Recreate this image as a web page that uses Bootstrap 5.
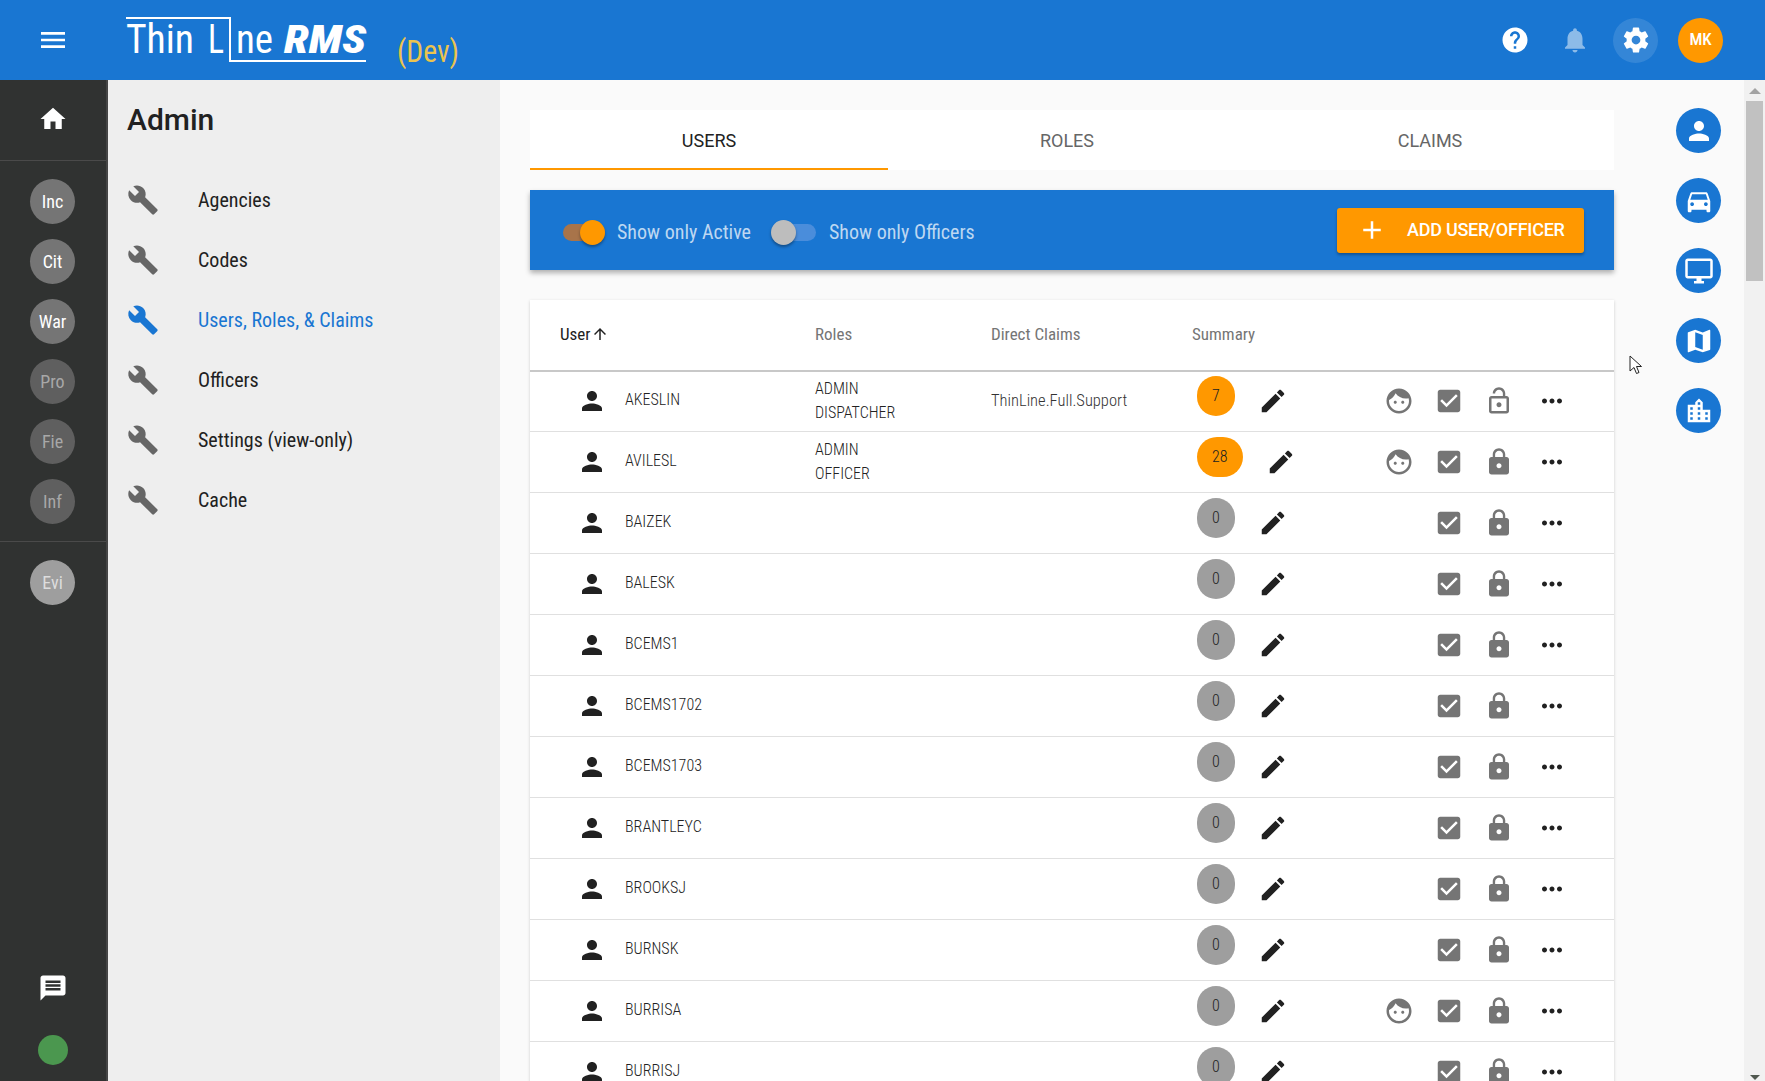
<!DOCTYPE html>
<html lang="en"><head><meta charset="utf-8"><title>Thin Line RMS</title>
<link href="https://cdn.jsdelivr.net/npm/bootstrap@5.3.0/dist/css/bootstrap.min.css" rel="stylesheet">
<style>
html,body{height:1081px;overflow:hidden}
body{font-family:Roboto,"Liberation Sans",sans-serif;background:#fafafa;color:#212121;font-stretch:75%}
.ic{width:30px;height:30px;fill:currentColor;flex:none;display:block}
.topbar{height:80px;background:#1976d2;color:#fff}
.menu-btn{margin-left:37px;width:32px;height:32px}
.logo{margin-left:57px;width:345px;height:80px}
.top-act{width:60px;height:45px}
.top-gear{background:rgba(255,255,255,.12);width:45px;border-radius:50%;margin:0 8px}
.top-mk{background:#ff9800;width:45px;height:45px;border-radius:50%;font-size:17px;font-weight:500;margin:0 42px 0 12px}
.rail{width:108px;background:#303231;border-right:2px solid #454545;color:#fff;padding-right:1px}
.rail-home{height:81px;border-bottom:1px solid #4a4a4a;padding-bottom:2px;margin-right:-1px}
.rail-group{padding:18px 0 17px;gap:15px;border-bottom:1px solid #4a4a4a;margin-right:-1px;padding-right:1px}
.rail-evi{padding-top:18px}
.rail-c{width:45px;height:45px;border-radius:50%;background:#757575;font-size:18px}
.rail-dim{background:#5f5f5f;color:#a8a8a8}
.rail-lite{background:#9e9e9e;color:#ddd}
.rail-dot{width:30px;height:30px;border-radius:50%;background:#4b974f;margin:32px 0 16px}
.sub{width:392px;background:#eee;padding-left:19px}
.sub-title{font-size:30px;font-weight:500;line-height:36px;margin:22px 0 32px;font-stretch:100%}
.sub-item{height:60px;font-size:20px;color:#212121}
.sub-item .ic{width:32px;height:32px;color:#666;margin-right:39px}
.sub-on,.sub-on .ic{color:#1976d2!important}
.work{width:1084px;margin-left:30px;padding-top:30px}
.tabs{height:60px;background:#fff;font-size:18px;font-stretch:100%}
.tabs .nav-link{height:60px;color:#666;padding:2px 0 0;border-bottom:2px solid transparent}
.tabs .nav-link.active{color:#212121;border-bottom-color:#ff9800}
.t1{width:358px}.t3{width:368px}
.bluebar{height:80px;margin:20px 0 30px;background:#1976d2;box-shadow:0 3px 5px rgba(0,0,0,.3);padding:0 30px 0 33px;color:rgba(255,255,255,.72);font-size:20px}
.bar-lbl{margin-top:3px}
.sw{width:42px;height:17px;border-radius:9px;position:relative;margin:5px 12px 0 0}
.sw i{position:absolute;top:-4px;width:25px;height:25px;border-radius:50%;box-shadow:0 2px 3px rgba(0,0,0,.35)}
.sw-on{background:#a8744a}.sw-on i{right:0;background:#ff9800}
.sw-off{background:#4a8ddb;margin-left:23px;margin-right:13px}.sw-off i{left:-3px;background:#bdbdbd}
.add-btn{background:#ff9800;color:#fff;height:45px;width:247px;border-radius:3px;border:0;font-size:18px;letter-spacing:-.25px;font-weight:500;padding:0 0 2px 20px;box-shadow:0 2px 3px rgba(0,0,0,.3);text-transform:uppercase}
.add-btn .ic{margin-right:20px;margin-top:2px}
.grid-card{background:#fff;box-shadow:0 1px 3px rgba(0,0,0,.18)}
.users{table-layout:fixed;width:100%;margin:0;font-size:16px;font-weight:350;--bs-table-bg:transparent}
.users th,.users td{padding:0;vertical-align:middle}
.users thead th{height:71px;font-weight:400;font-size:17px;color:#757575;border-bottom:2px solid #c8c8c8}
.users thead th.sorted{color:#212121;padding-left:30px}
.users thead .ic{width:18px;height:18px;display:inline-block;vertical-align:-3px;margin-left:1px}
.users td{height:61px;border-bottom:1px solid #e0e0e0;color:#222}
.users tbody tr:first-child td{height:60px}
.users td.u-name{padding-left:47px;padding-bottom:2px}
.u-name .ic{margin-right:18px;color:#212121;margin-top:2px}
.users td.roles{line-height:24px}
.users td.claim{font-size:16.5px;color:#333}
.cnt{min-width:38px;height:40px;padding:0 15px;border-radius:20px;background:#9e9e9e;margin:0 23px 10px 5px;color:#212121}
.cnt-on{background:#ff9800}
.users td.act{color:#757575}.act .ic{margin:0 auto}
.more-ic{color:#212121}
.scrollrail{width:130px;padding:28px 0 0 62px;gap:25px}
.fab{width:45px;height:45px;border-radius:50%;background:#1976d2;color:#fff}
.sbar{width:21px;background:#f1f1f1;padding:8px 2px 1px 2px}
.sbar-up{width:0;height:0;border:6px solid transparent;border-top:0;border-bottom:6px solid #a3a3a3;margin:0 auto 7px}
.sbar-th{height:180px;background:#c1c1c1}
.sbar-dn{width:0;height:0;border:5px solid transparent;border-bottom:0;border-top:5px solid #50584f;margin:auto auto 0}
.cursor{position:absolute;left:1629px;top:355px;width:14px;height:20px}
</style></head><body>
<svg width="0" height="0" class="d-none"><defs>
<symbol id="i-menu" viewBox="0 0 24 24"><path d="M3 18h18v-2H3v2zm0-5h18v-2H3v2zm0-7v2h18V6H3z"/></symbol>
<symbol id="i-home" viewBox="0 0 24 24"><path d="M10 20v-6h4v6h5v-8h3L12 3 2 12h3v8z"/></symbol>
<symbol id="i-wr" viewBox="0 0 24 24"><path d="M22.7 19l-9.1-9.1c.9-2.3.4-5-1.5-6.9-2-2-5-2.4-7.4-1.3L9 6 6 9 1.6 4.7C.4 7.1.9 10.1 2.9 12.1c1.9 1.9 4.6 2.4 6.9 1.5l9.1 9.1c.4.4 1 .4 1.4 0l2.3-2.3c.5-.4.5-1.1.1-1.4z"/></symbol>
<symbol id="i-help" viewBox="0 0 24 24"><path d="M12 2C6.48 2 2 6.48 2 12s4.48 10 10 10 10-4.48 10-10S17.52 2 12 2zm1 17h-2v-2h2v2zm2.07-7.75l-.9.92C13.45 12.9 13 13.5 13 15h-2v-.5c0-1.1.45-2.1 1.17-2.83l1.24-1.26c.37-.36.59-.86.59-1.41 0-1.1-.9-2-2-2s-2 .9-2 2H8c0-2.21 1.79-4 4-4s4 1.79 4 4c0 .88-.36 1.68-.93 2.25z"/></symbol>
<symbol id="i-bell" viewBox="0 0 24 24"><path d="M12 22c1.1 0 2-.9 2-2h-4c0 1.1.9 2 2 2zm6-6v-5c0-3.07-1.63-5.64-4.5-6.32V4c0-.83-.67-1.5-1.5-1.5s-1.5.67-1.5 1.5v.68C7.64 5.36 6 7.92 6 11v5l-2 2v1h16v-1l-2-2z"/></symbol>
<symbol id="i-gear" viewBox="0 0 24 24"><path d="M19.43 12.98c.04-.32.07-.64.07-.98s-.03-.66-.07-.98l2.11-1.65c.19-.15.24-.42.12-.64l-2-3.46c-.12-.22-.39-.3-.61-.22l-2.49 1c-.52-.4-1.08-.73-1.69-.98l-.38-2.65C14.46 2.18 14.25 2 14 2h-4c-.25 0-.46.18-.49.42l-.38 2.65c-.61.25-1.17.59-1.69.98l-2.49-1c-.23-.09-.49 0-.61.22l-2 3.46c-.13.22-.07.49.12.64l2.11 1.65c-.04.32-.07.65-.07.98s.03.66.07.98l-2.11 1.65c-.19.15-.24.42-.12.64l2 3.46c.12.22.39.3.61.22l2.49-1c.52.4 1.08.73 1.69.98l.38 2.65c.03.24.24.42.49.42h4c.25 0 .46-.18.49-.42l.38-2.65c.61-.25 1.17-.59 1.69-.98l2.49 1c.23.09.49 0 .61-.22l2-3.46c.12-.22.07-.49-.12-.64l-2.11-1.65zM12 15.5c-1.93 0-3.5-1.57-3.5-3.5s1.57-3.5 3.5-3.5 3.5 1.57 3.5 3.5-1.57 3.5-3.5 3.5z"/></symbol>
<symbol id="i-p" viewBox="0 0 24 24"><path d="M12 12c2.21 0 4-1.79 4-4s-1.79-4-4-4-4 1.79-4 4 1.79 4 4 4zm0 2c-2.67 0-8 1.34-8 4v2h16v-2c0-2.66-5.33-4-8-4z"/></symbol>
<symbol id="i-car" viewBox="0 0 24 24"><path d="M18.92 6.01C18.72 5.42 18.16 5 17.5 5h-11c-.66 0-1.21.42-1.42 1.01L3 12v8c0 .55.45 1 1 1h1c.55 0 1-.45 1-1v-1h12v1c0 .55.45 1 1 1h1c.55 0 1-.45 1-1v-8l-2.08-5.99zM6.5 16c-.83 0-1.5-.67-1.5-1.5S5.67 13 6.5 13s1.5.67 1.5 1.5S7.33 16 6.5 16zm11 0c-.83 0-1.5-.67-1.5-1.5s.67-1.5 1.5-1.5 1.5.67 1.5 1.5-.67 1.5-1.5 1.5zM5 11l1.5-4.5h11L19 11H5z"/></symbol>
<symbol id="i-desk" viewBox="0 0 24 24"><path d="M21 2H3c-1.1 0-2 .9-2 2v12c0 1.1.9 2 2 2h7v2H8v2h8v-2h-2v-2h7c1.1 0 2-.9 2-2V4c0-1.1-.9-2-2-2zm0 14H3V4h18v12z"/></symbol>
<symbol id="i-map" viewBox="0 0 24 24"><path d="M20.5 3l-.16.03L15 5.1 9 3 3.36 4.9c-.21.07-.36.25-.36.48V20.5c0 .28.22.5.5.5l.16-.03L9 18.9l6 2.1 5.64-1.9c.21-.07.36-.25.36-.48V3.5c0-.28-.22-.5-.5-.5zM15 19l-6-2.11V5l6 2.11V19z"/></symbol>
<symbol id="i-city" viewBox="0 0 24 24"><path d="M15 11V5l-3-3-3 3v2H3v14h18V11h-6zm-8 8H5v-2h2v2zm0-4H5v-2h2v2zm0-4H5V9h2v2zm6 8h-2v-2h2v2zm0-4h-2v-2h2v2zm0-4h-2V9h2v2zm0-4h-2V5h2v2zm6 12h-2v-2h2v2zm0-4h-2v-2h2v2z"/></symbol>
<symbol id="i-face" viewBox="0 0 24 24"><path d="M9 11.75c-.69 0-1.25.56-1.25 1.25s.56 1.25 1.25 1.25 1.25-.56 1.25-1.25-.56-1.25-1.25-1.25zm6 0c-.69 0-1.25.56-1.25 1.25s.56 1.25 1.25 1.25 1.25-.56 1.25-1.25-.56-1.25-1.25-1.25zM12 2C6.48 2 2 6.48 2 12s4.48 10 10 10 10-4.48 10-10S17.52 2 12 2zm0 18c-4.41 0-8-3.59-8-8 0-.29.02-.58.05-.86 2.36-1.05 4.23-2.98 5.21-5.37C11.07 8.33 14.05 10 17.42 10c.78 0 1.53-.09 2.25-.26.21.71.33 1.47.33 2.26 0 4.41-3.59 8-8 8z"/></symbol>
<symbol id="i-chk" viewBox="0 0 24 24"><path d="M19 3H5c-1.11 0-2 .9-2 2v14c0 1.1.89 2 2 2h14c1.11 0 2-.9 2-2V5c0-1.1-.89-2-2-2zm-9 14l-5-5 1.41-1.41L10 14.17l7.59-7.59L19 8l-9 9z"/></symbol>
<symbol id="i-lock" viewBox="0 0 24 24"><path d="M18 8h-1V6c0-2.76-2.24-5-5-5S7 3.24 7 6v2H6c-1.1 0-2 .9-2 2v10c0 1.1.9 2 2 2h12c1.1 0 2-.9 2-2V10c0-1.1-.9-2-2-2zm-6 9c-1.1 0-2-.9-2-2s.9-2 2-2 2 .9 2 2-.9 2-2 2zm3.1-9H8.9V6c0-1.71 1.39-3.1 3.1-3.1 1.71 0 3.1 1.39 3.1 3.1v2z"/></symbol>
<symbol id="i-open" viewBox="0 0 24 24"><path d="M12 17c1.1 0 2-.9 2-2s-.9-2-2-2-2 .9-2 2 .9 2 2 2zm6-9h-1V6c0-2.76-2.24-5-5-5S7 3.24 7 6h1.9c0-1.71 1.39-3.1 3.1-3.1 1.71 0 3.1 1.39 3.1 3.1v2H6c-1.1 0-2 .9-2 2v10c0 1.1.9 2 2 2h12c1.1 0 2-.9 2-2V10c0-1.1-.9-2-2-2zm0 12H6V10h12v10z"/></symbol>
<symbol id="i-more" viewBox="0 0 24 24"><path d="M6 10c-1.1 0-2 .9-2 2s.9 2 2 2 2-.9 2-2-.9-2-2-2zm12 0c-1.1 0-2 .9-2 2s.9 2 2 2 2-.9 2-2-.9-2-2-2zm-6 0c-1.1 0-2 .9-2 2s.9 2 2 2 2-.9 2-2-.9-2-2-2z"/></symbol>
<symbol id="i-edit" viewBox="0 0 24 24"><path d="M3 17.25V21h3.75L17.81 9.94l-3.75-3.75L3 17.25zM20.71 7.04c.39-.39.39-1.02 0-1.41l-2.34-2.34c-.39-.39-1.02-.39-1.41 0l-1.83 1.83 3.75 3.75 1.83-1.83z"/></symbol>
<symbol id="i-msg" viewBox="0 0 24 24"><path d="M20 2H4c-1.1 0-1.99.9-1.99 2L2 22l4-4h14c1.1 0 2-.9 2-2V4c0-1.1-.9-2-2-2zm-2 12H6v-2h12v2zm0-3H6V9h12v2zm0-3H6V6h12v2z"/></symbol>
<symbol id="i-up" viewBox="0 0 24 24"><path d="M4 12l1.41 1.41L11 7.83V20h2V7.83l5.58 5.59L20 12l-8-8-8 8z"/></symbol>
<symbol id="i-add" viewBox="0 0 24 24"><path d="M19 13h-6v6h-2v-6H5v-2h6V5h2v6h6v2z"/></symbol>
</defs></svg>

<header class="topbar d-flex align-items-center">
  <svg class="ic menu-btn"><use href="#i-menu"/></svg>
  <svg class="logo" viewBox="0 0 345 80">
    <path d="M0 18H104V61H240" fill="none" stroke="#fff" stroke-width="2"/>
    <text x="0" y="53" font-family="Roboto" font-size="41" fill="#fff" textLength="68" lengthAdjust="spacingAndGlyphs">Thin</text>
    <text x="82" y="53" font-family="Roboto" font-size="41" fill="#fff" textLength="16" lengthAdjust="spacingAndGlyphs">L</text>
    <text x="110" y="53" font-family="Roboto" font-size="41" fill="#fff" textLength="37" lengthAdjust="spacingAndGlyphs">ne</text>
    <text x="158" y="53" font-family="Roboto" font-weight="900" font-style="italic" font-size="39" fill="#fff" textLength="82" lengthAdjust="spacingAndGlyphs">RMS</text>
    <text x="271" y="62" font-family="Roboto" font-size="31" fill="#ebc44e" textLength="62" lengthAdjust="spacingAndGlyphs">(Dev)</text>
  </svg>
  <div class="ms-auto d-flex align-items-center">
    <div class="top-act d-flex align-items-center justify-content-center"><svg class="ic"><use href="#i-help"/></svg></div>
    <div class="top-act d-flex align-items-center justify-content-center opacity-50"><svg class="ic"><use href="#i-bell"/></svg></div>
    <div class="top-act top-gear d-flex align-items-center justify-content-center"><svg class="ic"><use href="#i-gear"/></svg></div>
    <div class="top-mk d-flex align-items-center justify-content-center">MK</div>
  </div>
</header>

<div class="d-flex" style="height:1001px">
  <nav class="rail d-flex flex-column align-items-stretch">
    <div class="rail-home d-flex align-items-center justify-content-center"><svg class="ic"><use href="#i-home"/></svg></div>
    <div class="rail-group d-flex flex-column align-items-center">
      <div class="rail-c d-flex align-items-center justify-content-center">Inc</div>
      <div class="rail-c d-flex align-items-center justify-content-center">Cit</div>
      <div class="rail-c d-flex align-items-center justify-content-center">War</div>
      <div class="rail-c rail-dim d-flex align-items-center justify-content-center">Pro</div>
      <div class="rail-c rail-dim d-flex align-items-center justify-content-center">Fie</div>
      <div class="rail-c rail-dim d-flex align-items-center justify-content-center">Inf</div>
    </div>
    <div class="d-flex justify-content-center rail-evi"><div class="rail-c rail-lite d-flex align-items-center justify-content-center">Evi</div></div>
    <div class="mt-auto d-flex flex-column align-items-center"><svg class="ic"><use href="#i-msg"/></svg><div class="rail-dot"></div></div>
  </nav>
  <aside class="sub">
    <div class="sub-title">Admin</div>
    <div class="sub-item d-flex align-items-center"><svg class="ic"><use href="#i-wr"/></svg>Agencies</div>
    <div class="sub-item d-flex align-items-center"><svg class="ic"><use href="#i-wr"/></svg>Codes</div>
    <div class="sub-item sub-on d-flex align-items-center"><svg class="ic"><use href="#i-wr"/></svg>Users, Roles, &amp; Claims</div>
    <div class="sub-item d-flex align-items-center"><svg class="ic"><use href="#i-wr"/></svg>Officers</div>
    <div class="sub-item d-flex align-items-center"><svg class="ic"><use href="#i-wr"/></svg>Settings (view-only)</div>
    <div class="sub-item d-flex align-items-center"><svg class="ic"><use href="#i-wr"/></svg>Cache</div>
  </aside>
  <main class="work">
    <ul class="nav tabs">
      <li class="nav-item t1"><a class="nav-link active d-flex align-items-center justify-content-center" href="#">USERS</a></li>
      <li class="nav-item t1"><a class="nav-link d-flex align-items-center justify-content-center" href="#">ROLES</a></li>
      <li class="nav-item t3"><a class="nav-link d-flex align-items-center justify-content-center" href="#">CLAIMS</a></li>
    </ul>
    <div class="bluebar d-flex align-items-center">
      <span class="sw sw-on"><i></i></span><span class="bar-lbl">Show only Active</span>
      <span class="sw sw-off"><i></i></span><span class="bar-lbl">Show only Officers</span>
      <button class="add-btn ms-auto d-flex align-items-center" type="button"><svg class="ic"><use href="#i-add"/></svg>Add User/Officer</button>
    </div>
    <div class="grid-card">
      <table class="table users">
        <colgroup><col style="width:285px"><col style="width:176px"><col style="width:201px"><col style="width:182px"><col style="width:50px"><col style="width:50px"><col style="width:50px"><col style="width:56px"><col></colgroup>
        <thead><tr><th class="sorted">User<svg class="ic"><use href="#i-up"/></svg></th><th>Roles</th><th>Direct Claims</th><th>Summary</th><th></th><th></th><th></th><th></th><th></th></tr></thead>
        <tbody>
        <tr><td class="u-name"><div class="d-flex align-items-center"><svg class="ic"><use href="#i-p"/></svg>AKESLIN</div></td><td class="roles">ADMIN<br>DISPATCHER</td><td class="claim">ThinLine.Full.Support</td><td><div class="d-flex align-items-center"><div class="cnt cnt-on d-flex align-items-center justify-content-center">7</div><svg class="ic more-ic"><use href="#i-edit"/></svg></div></td><td class="act"><svg class="ic"><use href="#i-face"/></svg></td><td class="act"><svg class="ic"><use href="#i-chk"/></svg></td><td class="act"><svg class="ic"><use href="#i-open"/></svg></td><td><svg class="ic mx-auto more-ic"><use href="#i-more"/></svg></td><td></td></tr>
        <tr><td class="u-name"><div class="d-flex align-items-center"><svg class="ic"><use href="#i-p"/></svg>AVILESL</div></td><td class="roles">ADMIN<br>OFFICER</td><td></td><td><div class="d-flex align-items-center"><div class="cnt cnt-on d-flex align-items-center justify-content-center">28</div><svg class="ic more-ic"><use href="#i-edit"/></svg></div></td><td class="act"><svg class="ic"><use href="#i-face"/></svg></td><td class="act"><svg class="ic"><use href="#i-chk"/></svg></td><td class="act"><svg class="ic"><use href="#i-lock"/></svg></td><td><svg class="ic mx-auto more-ic"><use href="#i-more"/></svg></td><td></td></tr>
        <tr><td class="u-name"><div class="d-flex align-items-center"><svg class="ic"><use href="#i-p"/></svg>BAIZEK</div></td><td></td><td></td><td><div class="d-flex align-items-center"><div class="cnt d-flex align-items-center justify-content-center">0</div><svg class="ic more-ic"><use href="#i-edit"/></svg></div></td><td></td><td class="act"><svg class="ic"><use href="#i-chk"/></svg></td><td class="act"><svg class="ic"><use href="#i-lock"/></svg></td><td><svg class="ic mx-auto more-ic"><use href="#i-more"/></svg></td><td></td></tr>
        <tr><td class="u-name"><div class="d-flex align-items-center"><svg class="ic"><use href="#i-p"/></svg>BALESK</div></td><td></td><td></td><td><div class="d-flex align-items-center"><div class="cnt d-flex align-items-center justify-content-center">0</div><svg class="ic more-ic"><use href="#i-edit"/></svg></div></td><td></td><td class="act"><svg class="ic"><use href="#i-chk"/></svg></td><td class="act"><svg class="ic"><use href="#i-lock"/></svg></td><td><svg class="ic mx-auto more-ic"><use href="#i-more"/></svg></td><td></td></tr>
        <tr><td class="u-name"><div class="d-flex align-items-center"><svg class="ic"><use href="#i-p"/></svg>BCEMS1</div></td><td></td><td></td><td><div class="d-flex align-items-center"><div class="cnt d-flex align-items-center justify-content-center">0</div><svg class="ic more-ic"><use href="#i-edit"/></svg></div></td><td></td><td class="act"><svg class="ic"><use href="#i-chk"/></svg></td><td class="act"><svg class="ic"><use href="#i-lock"/></svg></td><td><svg class="ic mx-auto more-ic"><use href="#i-more"/></svg></td><td></td></tr>
        <tr><td class="u-name"><div class="d-flex align-items-center"><svg class="ic"><use href="#i-p"/></svg>BCEMS1702</div></td><td></td><td></td><td><div class="d-flex align-items-center"><div class="cnt d-flex align-items-center justify-content-center">0</div><svg class="ic more-ic"><use href="#i-edit"/></svg></div></td><td></td><td class="act"><svg class="ic"><use href="#i-chk"/></svg></td><td class="act"><svg class="ic"><use href="#i-lock"/></svg></td><td><svg class="ic mx-auto more-ic"><use href="#i-more"/></svg></td><td></td></tr>
        <tr><td class="u-name"><div class="d-flex align-items-center"><svg class="ic"><use href="#i-p"/></svg>BCEMS1703</div></td><td></td><td></td><td><div class="d-flex align-items-center"><div class="cnt d-flex align-items-center justify-content-center">0</div><svg class="ic more-ic"><use href="#i-edit"/></svg></div></td><td></td><td class="act"><svg class="ic"><use href="#i-chk"/></svg></td><td class="act"><svg class="ic"><use href="#i-lock"/></svg></td><td><svg class="ic mx-auto more-ic"><use href="#i-more"/></svg></td><td></td></tr>
        <tr><td class="u-name"><div class="d-flex align-items-center"><svg class="ic"><use href="#i-p"/></svg>BRANTLEYC</div></td><td></td><td></td><td><div class="d-flex align-items-center"><div class="cnt d-flex align-items-center justify-content-center">0</div><svg class="ic more-ic"><use href="#i-edit"/></svg></div></td><td></td><td class="act"><svg class="ic"><use href="#i-chk"/></svg></td><td class="act"><svg class="ic"><use href="#i-lock"/></svg></td><td><svg class="ic mx-auto more-ic"><use href="#i-more"/></svg></td><td></td></tr>
        <tr><td class="u-name"><div class="d-flex align-items-center"><svg class="ic"><use href="#i-p"/></svg>BROOKSJ</div></td><td></td><td></td><td><div class="d-flex align-items-center"><div class="cnt d-flex align-items-center justify-content-center">0</div><svg class="ic more-ic"><use href="#i-edit"/></svg></div></td><td></td><td class="act"><svg class="ic"><use href="#i-chk"/></svg></td><td class="act"><svg class="ic"><use href="#i-lock"/></svg></td><td><svg class="ic mx-auto more-ic"><use href="#i-more"/></svg></td><td></td></tr>
        <tr><td class="u-name"><div class="d-flex align-items-center"><svg class="ic"><use href="#i-p"/></svg>BURNSK</div></td><td></td><td></td><td><div class="d-flex align-items-center"><div class="cnt d-flex align-items-center justify-content-center">0</div><svg class="ic more-ic"><use href="#i-edit"/></svg></div></td><td></td><td class="act"><svg class="ic"><use href="#i-chk"/></svg></td><td class="act"><svg class="ic"><use href="#i-lock"/></svg></td><td><svg class="ic mx-auto more-ic"><use href="#i-more"/></svg></td><td></td></tr>
        <tr><td class="u-name"><div class="d-flex align-items-center"><svg class="ic"><use href="#i-p"/></svg>BURRISA</div></td><td></td><td></td><td><div class="d-flex align-items-center"><div class="cnt d-flex align-items-center justify-content-center">0</div><svg class="ic more-ic"><use href="#i-edit"/></svg></div></td><td class="act"><svg class="ic"><use href="#i-face"/></svg></td><td class="act"><svg class="ic"><use href="#i-chk"/></svg></td><td class="act"><svg class="ic"><use href="#i-lock"/></svg></td><td><svg class="ic mx-auto more-ic"><use href="#i-more"/></svg></td><td></td></tr>
        <tr><td class="u-name"><div class="d-flex align-items-center"><svg class="ic"><use href="#i-p"/></svg>BURRISJ</div></td><td></td><td></td><td><div class="d-flex align-items-center"><div class="cnt d-flex align-items-center justify-content-center">0</div><svg class="ic more-ic"><use href="#i-edit"/></svg></div></td><td></td><td class="act"><svg class="ic"><use href="#i-chk"/></svg></td><td class="act"><svg class="ic"><use href="#i-lock"/></svg></td><td><svg class="ic mx-auto more-ic"><use href="#i-more"/></svg></td><td></td></tr>
        </tbody>
      </table>
    </div>
  </main>
  <div class="scrollrail d-flex flex-column">
    <div class="fab d-flex align-items-center justify-content-center"><svg class="ic"><use href="#i-p"/></svg></div>
    <div class="fab d-flex align-items-center justify-content-center"><svg class="ic"><use href="#i-car"/></svg></div>
    <div class="fab d-flex align-items-center justify-content-center"><svg class="ic"><use href="#i-desk"/></svg></div>
    <div class="fab d-flex align-items-center justify-content-center"><svg class="ic"><use href="#i-map"/></svg></div>
    <div class="fab d-flex align-items-center justify-content-center"><svg class="ic"><use href="#i-city"/></svg></div>
  </div>
  <div class="sbar d-flex flex-column"><div class="sbar-up"></div><div class="sbar-th"></div><div class="sbar-dn"></div></div>
</div>
<svg class="cursor" viewBox="0 0 14 20"><path d="M1 1v15l4-3.5 2.5 6 2.5-1-2.5-6h5z" fill="#fff" stroke="#222" stroke-width="1"/></svg>
</body></html>
